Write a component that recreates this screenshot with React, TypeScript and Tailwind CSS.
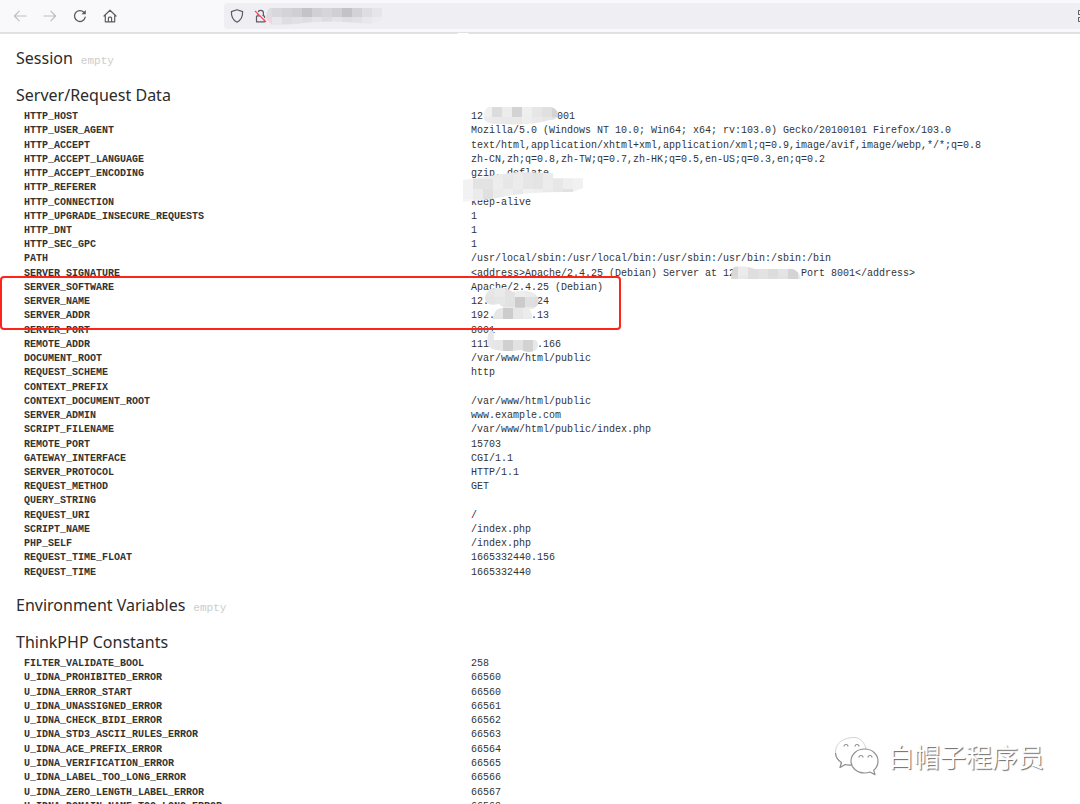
import React, { useId } from "react";
import { twMerge } from "tailwind-merge";

interface MosaicProps {
  w: number;
  h: number;
  shape: string;
  cells: string[][];
  ox?: number;
  oy?: number;
  className?: string;
}

// Pixelated patch, 10px squares clipped to a brush stroke
const Mosaic: React.FC<MosaicProps> = ({ w, h, shape, cells, ox = 0, oy = 0, className }) => {
  const id = useId();
  return (
    <svg
      width={w}
      height={h}
      viewBox={`0 0 ${w} ${h}`}
      className={twMerge("absolute max-w-none", className)}
      aria-hidden="true"
    >
      <clipPath id={id}>
        <path d={shape} />
      </clipPath>
      <g clipPath={`url(#${id})`} shapeRendering="crispEdges">
        {cells.map((row, y) =>
          row.map((fill, x) => (
            <rect key={`${x}-${y}`} x={ox + x * 10} y={oy + y * 10} width="10" height="10" fill={fill} />
          ))
        )}
      </g>
    </svg>
  );
};

const HostMosaic = () => (
  <span className="relative inline-block w-[68px]">
    &nbsp;
    <Mosaic
      w={75}
      h={19}
      ox={-1}
      oy={0}
      className="-left-1.5 -top-1"
      shape="M5 0H68Q75 2 75 8Q74 13 67 13Q45 19 20 17Q3 18 1 12Q-1 5 5 0Z"
      cells={[
        ["#f0f0f0", "#dcdcdc", "#ececec", "#d3d3d3", "#efefef", "#e6e6e6", "#e0e0e0", "#d4d4d4"],
        ["#ececec", "#eaeaea", "#e9e9e9", "#e9e9e9", "#eeeeee", "#eaeaea", "#e6e6e6", "#e2e2e2"],
      ]}
    />
  </span>
);

const RefererMosaic = () => (
  <span className="relative block h-3">
    <Mosaic
      w={121}
      h={30}
      ox={0}
      oy={-3}
      className="-left-2 -top-2.5"
      shape="M0 8Q30 3 55 0L90 1V6H120V16L110 20Q60 19 30 27L0 30Z"
      cells={[
        ["#f4f4f4", "#f0f0f0", "#ececec", "#ebebeb", "#e8e8e8", "#ebebeb", "#e6e6e6", "#e4e4e4", "#ebebeb", "#eeeeee", "#f2f2f2", "#f4f4f4", "#f6f6f6"],
        ["#f2f2f2", "#e3e3e3", "#e3e3e3", "#ededed", "#e7e7e7", "#ececec", "#e6e6e6", "#e4e4e4", "#ececec", "#e7e7e7", "#eeeeee", "#f1f1f1", "#f6f6f6"],
        ["#f2f2f2", "#ebebeb", "#e0e0e0", "#ebebeb", "#eeeeee", "#e9e9e9", "#f1f1f1", "#eeeeee", "#eaeaea", "#e6e6e6", "#e2e2e2", "#f2f2f2", "#f8f8f8"],
        ["#f5f5f5", "#eeeeee", "#ebebeb", "#f2f2f2", "#f2f2f2", "#f2f2f2", "#f2f2f2", "#f2f2f2", "#f2f2f2", "#f2f2f2", "#f2f2f2", "#f2f2f2", "#f8f8f8"],
      ]}
    />
  </span>
);

const SignatureMosaic = () => (
  <span className="relative inline-block w-[66px]">
    &nbsp;
    <Mosaic
      w={70}
      h={14}
      ox={-3}
      className="-left-1 -top-0.5"
      shape="M3 1Q14 -1 24 3H62Q68 5 70 13H0Q0 5 3 1Z"
      cells={[
        ["#d8d8d8", "#ebebeb", "#dedede", "#e2e2e2", "#dcdcdc", "#e4e4e4", "#d4d4d4", "#e8e8e8"],
        ["#dcdcdc", "#e8e8e8", "#dedede", "#e2e2e2", "#dedede", "#e2e2e2", "#d4d4d4", "#e8e8e8"],
      ]}
    />
  </span>
);

const NameMosaic = () => (
  <span className="relative inline-block w-12">
    &nbsp;
    <Mosaic
      w={55}
      h={22}
      ox={0}
      oy={-1}
      className="-left-1 -top-2"
      shape="M6 1Q18 -3 28 4Q46 0 53 9Q56 17 48 21H20L14 16Q2 19 0 11Q0 4 6 1Z"
      cells={[
        ["#e6e6e6", "#eaeaea", "#e2e2e2", "#eeeeee", "#ebebeb", "#e6e6e6"],
        ["#e4e4e4", "#e6e6e6", "#e2e2e2", "#cbcbcb", "#e0e0e0", "#dedede"],
        ["#eeeeee", "#e6e6e6", "#ececec", "#d4d4d4", "#eaeaea", "#ebebeb"],
      ]}
    />
  </span>
);

const AddrMosaic = () => (
  <span className="relative inline-block w-9">
    &nbsp;
    <Mosaic
      w={39}
      h={12}
      ox={0}
      className="-left-0.5 -top-0.5"
      shape="M2 4Q4 0 10 0H36Q39 4 39 11H0Q0 6 2 4Z"
      cells={[
        ["#e6e6e6", "#cccccc", "#e6e6e6", "#ececec"],
        ["#e2e2e2", "#cecece", "#e6e6e6", "#ebebeb"],
      ]}
    />
  </span>
);

const RemoteMosaic = () => (
  <span className="relative inline-block w-12">
    &nbsp;
    <Mosaic
      w={53}
      h={22}
      ox={-4}
      oy={-1}
      className="-left-0.5 -top-2"
      shape="M2 1Q5 -2 7 2V9H49Q53 14 49 19Q42 23 34 19Q10 22 2 16Q-1 8 2 1Z"
      cells={[
        ["#e8e8e8", "#eaeaea", "#ffffff", "#ffffff", "#ffffff", "#ffffff"],
        ["#e8e8e8", "#e6e6e6", "#d0d0d0", "#e2e2e2", "#d2d2d2", "#e8e8e8"],
        ["#e4e4e4", "#e6e6e6", "#cecece", "#e4e4e4", "#d4d4d4", "#e8e8e8"],
      ]}
    />
  </span>
);

type Row = [string, React.ReactNode];

const serverData: Row[] = [
  ["HTTP_HOST", <>12.<HostMosaic />001</>],
  ["HTTP_USER_AGENT", "Mozilla/5.0 (Windows NT 10.0; Win64; x64; rv:103.0) Gecko/20100101 Firefox/103.0"],
  ["HTTP_ACCEPT", "text/html,application/xhtml+xml,application/xml;q=0.9,image/avif,image/webp,*/*;q=0.8"],
  ["HTTP_ACCEPT_LANGUAGE", "zh-CN,zh;q=0.8,zh-TW;q=0.7,zh-HK;q=0.5,en-US;q=0.3,en;q=0.2"],
  ["HTTP_ACCEPT_ENCODING", "gzip, deflate"],
  ["HTTP_REFERER", <RefererMosaic />],
  ["HTTP_CONNECTION", "keep-alive"],
  ["HTTP_UPGRADE_INSECURE_REQUESTS", "1"],
  ["HTTP_DNT", "1"],
  ["HTTP_SEC_GPC", "1"],
  ["PATH", "/usr/local/sbin:/usr/local/bin:/usr/sbin:/usr/bin:/sbin:/bin"],
  ["SERVER_SIGNATURE", <>{"<address>Apache/2.4.25 (Debian) Server at 12"}<SignatureMosaic />{"Port 8001</address>"}</>],
  ["SERVER_SOFTWARE", "Apache/2.4.25 (Debian)"],
  ["SERVER_NAME", <>12.<NameMosaic />24</>],
  ["SERVER_ADDR", <>192.<AddrMosaic />.13</>],
  ["SERVER_PORT", "8001"],
  ["REMOTE_ADDR", <>111<RemoteMosaic />.166</>],
  ["DOCUMENT_ROOT", "/var/www/html/public"],
  ["REQUEST_SCHEME", "http"],
  ["CONTEXT_PREFIX", ""],
  ["CONTEXT_DOCUMENT_ROOT", "/var/www/html/public"],
  ["SERVER_ADMIN", "www.example.com"],
  ["SCRIPT_FILENAME", "/var/www/html/public/index.php"],
  ["REMOTE_PORT", "15703"],
  ["GATEWAY_INTERFACE", "CGI/1.1"],
  ["SERVER_PROTOCOL", "HTTP/1.1"],
  ["REQUEST_METHOD", "GET"],
  ["QUERY_STRING", ""],
  ["REQUEST_URI", "/"],
  ["SCRIPT_NAME", "/index.php"],
  ["PHP_SELF", "/index.php"],
  ["REQUEST_TIME_FLOAT", "1665332440.156"],
  ["REQUEST_TIME", "1665332440"],
];

const constants: Row[] = [
  ["FILTER_VALIDATE_BOOL", "258"],
  ["U_IDNA_PROHIBITED_ERROR", "66560"],
  ["U_IDNA_ERROR_START", "66560"],
  ["U_IDNA_UNASSIGNED_ERROR", "66561"],
  ["U_IDNA_CHECK_BIDI_ERROR", "66562"],
  ["U_IDNA_STD3_ASCII_RULES_ERROR", "66563"],
  ["U_IDNA_ACE_PREFIX_ERROR", "66564"],
  ["U_IDNA_VERIFICATION_ERROR", "66565"],
  ["U_IDNA_LABEL_TOO_LONG_ERROR", "66566"],
  ["U_IDNA_ZERO_LENGTH_LABEL_ERROR", "66567"],
  ["U_IDNA_DOMAIN_NAME_TOO_LONG_ERROR", "66568"],
];

const DataTable: React.FC<{ rows: Row[]; className?: string }> = ({ rows, className }) => (
  <table
    className={twMerge(
      "w-full table-fixed border-collapse whitespace-nowrap font-['Liberation_Mono',monospace] text-[10px] leading-3",
      className
    )}
  >
    <tbody>
      {rows.map(([name, value]) => (
        <tr key={name}>
          <th scope="row" className="w-[447px] p-0 pl-2 text-left align-middle font-bold">
            {name}
          </th>
          <td className="p-0 pl-2 align-middle">{value}</td>
        </tr>
      ))}
    </tbody>
  </table>
);

const Heading: React.FC<{ title: string; empty?: boolean }> = ({ title, empty }) => (
  <h2 className="flex items-baseline gap-2 font-['Noto_Sans',sans-serif] text-base leading-6 text-[#2b2b2b]">
    {title}
    {empty && (
      <span className="font-['Liberation_Mono',monospace] text-[11px] leading-none text-[#cccccc]">
        empty
      </span>
    )}
  </h2>
);

const Toolbar = () => (
  <header className="relative flex h-[34px] shrink-0 items-center border-b-2 border-[#e1e1e3] bg-[#f9f9fb] pl-[13px]">
    <nav className="flex gap-4">
      <button aria-label="Back" className="text-[#c0c0c4]">
        <svg width="14" height="14" viewBox="0 0 14 14" fill="none" stroke="currentColor" strokeWidth="1.2" strokeLinecap="round" strokeLinejoin="round">
          <path d="M13 7H1.5M6.2 2.2L1.4 7l4.8 4.8" />
        </svg>
      </button>
      <button aria-label="Forward" className="text-[#c0c0c4]">
        <svg width="14" height="14" viewBox="0 0 14 14" fill="none" stroke="currentColor" strokeWidth="1.2" strokeLinecap="round" strokeLinejoin="round">
          <path d="M1 7h11.5M7.8 2.2L12.6 7l-4.8 4.8" />
        </svg>
      </button>
      <button aria-label="Reload" className="text-[#5b5b66]">
        <svg width="14" height="14" viewBox="0 0 14 14" fill="none" stroke="currentColor" strokeWidth="1.3" strokeLinecap="round">
          <path d="M12.2 8.2A5.4 5.4 0 1 1 10.8 3.3" />
          <path d="M12.8 1v4.3H8.5z" fill="currentColor" stroke="none" />
        </svg>
      </button>
      <button aria-label="Home" className="text-[#5b5b66]">
        <svg width="14" height="14" viewBox="0 0 14 14" fill="none" stroke="currentColor" strokeWidth="1.2" strokeLinecap="round" strokeLinejoin="round">
          <path d="M1 7L7 1.2 13 7M2.3 6V12.8H11.7V6M5.4 12.600V9.200a1 1 0 0 1 1-1h1.200a1 1 0 0 1 1 1v3.400" />
        </svg>
      </button>
    </nav>
    <div className="relative mb-px ml-[107px] flex h-[26px] flex-1 items-center gap-2.5 rounded-l bg-[#eeeef3] pl-1.5">
      <svg width="14" height="14" viewBox="0 0 14 14" fill="none" stroke="#5b5b66" strokeWidth="1.2" strokeLinejoin="round" aria-hidden="true">
        <path d="M7 .8L12.6 2.6C12.8 7.5 11 11.4 7 13.2C3 11.4 1.2 7.5 1.4 2.6Z" />
      </svg>
      <svg width="14" height="14" viewBox="0 0 14 14" fill="none" aria-hidden="true">
        <path d="M2.5 7h8v5.8h-8zM4 6.8V4a2.7 2.7 0 0 1 5.4 0v2.8" stroke="#5b5b66" strokeWidth="1.2" strokeLinejoin="round" />
        <path d="M1.800 1.500L12.800 12" stroke="#eeeef3" strokeWidth="1.200" />
        <path d="M1 2L12 13" stroke="#f0506e" strokeWidth="1.3" />
      </svg>
      <input aria-label="Address" className="min-w-0 flex-1 bg-transparent outline-none" />
      <Mosaic
        w={119}
        h={18}
        ox={-4}
        oy={0}
        className="left-[42px] top-1"
        shape="M4 1H118V12L104 17Q60 12 30 17L6 18L0 12Q0 4 4 1Z"
        cells={[
          ["#dddce1", "#d8d8dc", "#d4d4d8", "#cfcfd4", "#c3c3c8", "#d0d0d5", "#d6d6da", "#cfcfd4", "#c2c2c7", "#d2d2d7", "#dedee2", "#e6e6ea"],
          ["#f0d5dd", "#e8e6eb", "#dedee2", "#e0e0e5", "#dedee2", "#e3e3e8", "#dcdce1", "#e4e4e8", "#dedee3", "#e2e2e6", "#e8e8ec", "#ececf0"],
        ]}
      />
      <svg width="2" height="14" viewBox="0 0 2 14" fill="none" stroke="#5b5b66" aria-hidden="true">
        <path d="M3 1.5H.5v4H3M3 8.5H.5v4H3" />
      </svg>
    </div>
    <span className="absolute -bottom-1 left-[457px] h-[3px] w-3 rounded-full bg-white" />
  </header>
);

// Channel watermark, white glyphs with a grey edge
const Watermark = () => (
  <div className="absolute bottom-7 right-9 flex items-center gap-2">
    <svg width="46" height="40" viewBox="0 0 46 40" fill="#ffffff" strokeLinejoin="round" aria-hidden="true">
      <path
        d="M20 1.500C9 1.500 1.500 7.500 1.500 16c0 4.600 2.300 8 6 10.500L6 31.500l5.300-3c2.600.7 5.200.9 7.500.4L32 13C30.500 6 26 1.500 20 1.500Z"
        stroke="#d4d4d4"
      />
      <path d="M1.500 17c.2 4 2.500 7.300 6 9.500L6 31.500l5.300-3c2.300.6 4 .8 6.200.6" stroke="#8f8f8f" strokeWidth="1.2" fill="none" />
      <path
        d="M30.500 13C23 13 17 18.200 17 25s6 12 13.500 12c2 0 3.800-.4 5.500-1l5 2.600-1.300-4.300C42.500 32 44 28.800 44 25c0-6.800-6-12-13.500-12Z"
        stroke="#8f8f8f"
        strokeWidth="1.2"
      />
      <path d="M10 10.500a2 2 0 0 1 4 0M21 10.500a2 2 0 0 1 4 0M25 21.500a2 2 0 0 1 4 0M34 21.500a2 2 0 0 1 4 0" stroke="#8f8f8f" strokeWidth="1.2" fill="none" />
    </svg>
    <span className="font-['Noto_Sans_CJK_SC',sans-serif] text-[26px] leading-9 text-white [text-shadow:1px_1px_1px_#6b6b6b]">
      白帽子程序员
    </span>
  </div>
);

export default function App() {
  return (
    <div className="relative flex h-screen flex-col overflow-hidden bg-white text-[#333333]">
      <Toolbar />
      <main className="flex flex-col gap-[13px] px-4 pt-3">
        <section>
          <Heading title="Session" empty />
        </section>
        <section>
          <Heading title="Server/Request Data" />
          <div className="relative mt-[3px]">
            <DataTable rows={serverData} className="h-[470px]" />
            {/* highlighted rows */}
            <div className="absolute -left-4 top-[166px] h-[54px] w-[621px] rounded-sm border-2 border-[#ff2418]" />
          </div>
        </section>
        <section>
          <Heading title="Environment Variables" empty />
        </section>
        <section>
          <Heading title="ThinkPHP Constants" />
          <DataTable rows={constants} className="mt-[3px] h-[157px]" />
        </section>
      </main>
      <Watermark />
    </div>
  );
}
